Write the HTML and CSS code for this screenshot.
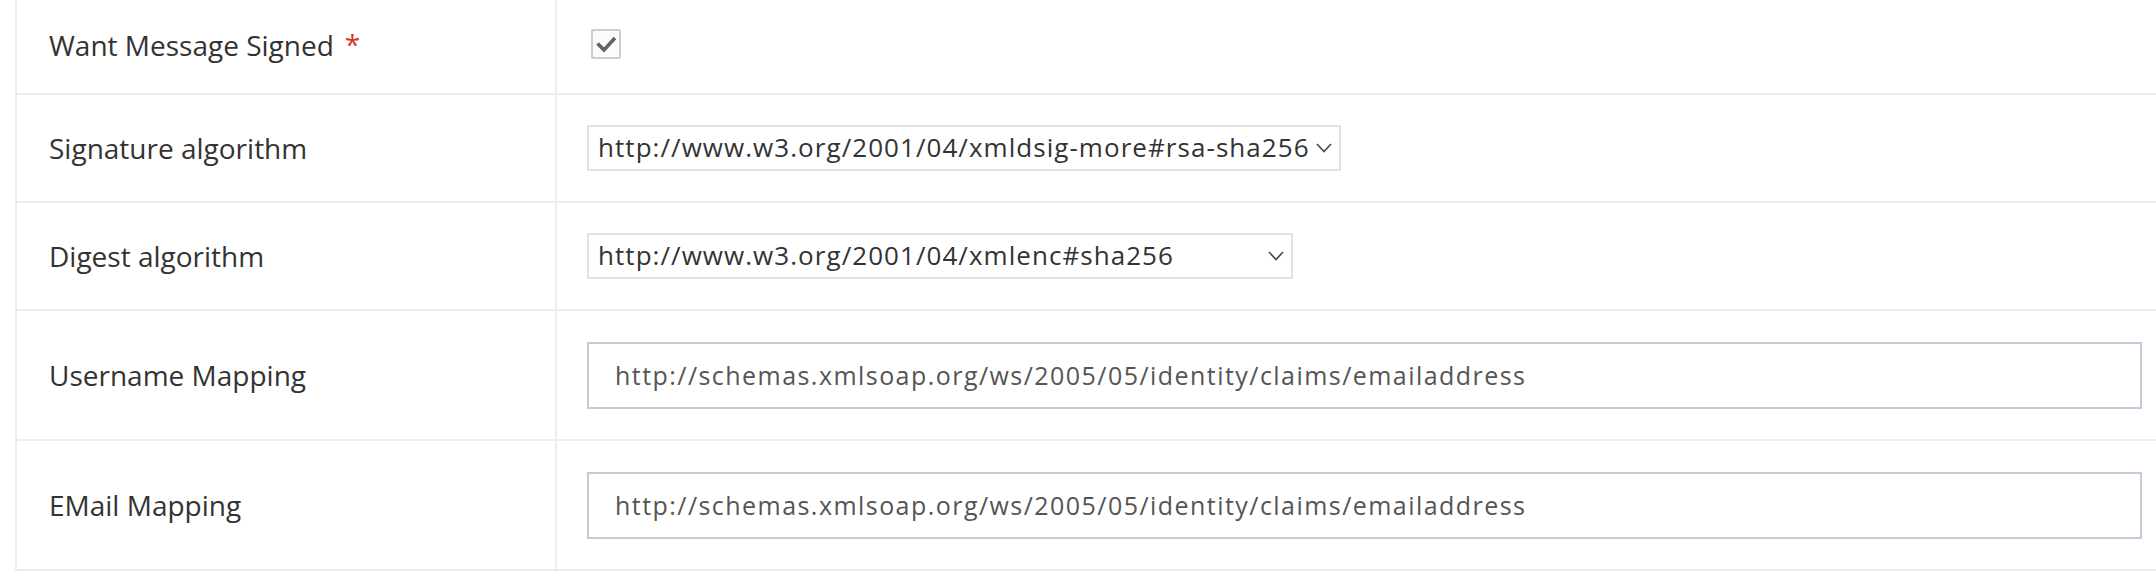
FILE: index.html
```html
<!DOCTYPE html>
<html lang="en">
<head>
<meta charset="utf-8">
<title>SAML settings</title>
<link rel="stylesheet" href="styles.css">
</head>
<body>
<div class="form-table">
  <div class="row row-check">
    <div class="label-cell"><span class="label">Want Message Signed</span><span class="req">*</span></div>
    <div class="value-cell">
      <span class="checkbox" role="checkbox" aria-checked="true">
        <svg width="26" height="26" viewBox="0 0 26 26"><path d="M4.5 12.5 L11 19 L22 7" fill="none" stroke="#626262" stroke-width="3.6"/></svg>
      </span>
    </div>
  </div>
  <div class="row row-mid">
    <div class="label-cell"><span class="label">Signature algorithm</span></div>
    <div class="value-cell">
      <div class="select sel-sig">
        <span class="select-text">http://www.w3.org/2001/04/xmldsig-more#rsa-sha256</span>
        <svg class="chev" width="16" height="10" viewBox="0 0 16 10"><path d="M1 1 L8 8.5 L15 1" fill="none" stroke="#4a4a4a" stroke-width="1.6"/></svg>
      </div>
    </div>
  </div>
  <div class="row row-mid">
    <div class="label-cell"><span class="label">Digest algorithm</span></div>
    <div class="value-cell">
      <div class="select sel-dig">
        <span class="select-text">http://www.w3.org/2001/04/xmlenc#sha256</span>
        <svg class="chev" width="16" height="10" viewBox="0 0 16 10"><path d="M1 1 L8 8.5 L15 1" fill="none" stroke="#4a4a4a" stroke-width="1.6"/></svg>
      </div>
    </div>
  </div>
  <div class="row row-tall">
    <div class="label-cell"><span class="label">Username Mapping</span></div>
    <div class="value-cell">
      <input class="text-input" type="text" value="http://schemas.xmlsoap.org/ws/2005/05/identity/claims/emailaddress">
    </div>
  </div>
  <div class="row row-tall">
    <div class="label-cell"><span class="label">EMail Mapping</span></div>
    <div class="value-cell">
      <input class="text-input" type="text" value="http://schemas.xmlsoap.org/ws/2005/05/identity/claims/emailaddress">
    </div>
  </div>
</div>
</body>
</html>
```

FILE: styles.css
```css
html, body {
  margin: 0;
  padding: 0;
  background: #ffffff;
}

body {
  font-family: "Open Sans", "Noto Sans", "Liberation Sans", sans-serif;
  color: #333333;
  overflow: hidden;
}

.form-table {
  margin-left: 15px;
  margin-top: -3px;
  border-left: 2px solid #ededed;
}

.row {
  display: grid;
  grid-template-columns: 540px 1fr;
  border-bottom: 2px solid #ededed;
}

.row-check { height: 96px; }
.row-mid { height: 106px; }
.row-tall { height: 128px; }

.label-cell {
  display: flex;
  align-items: center;
  padding-left: 32px;
  border-right: 2px solid #ededed;
  font-size: 28px;
  color: #333333;
}

.req {
  color: #d9332b;
  margin-left: 11px;
  font-size: 28px;
  position: relative;
  top: -1px;
}

.value-cell {
  display: flex;
  align-items: center;
  padding-left: 30px;
  padding-right: 14px;
}

.checkbox {
  box-sizing: border-box;
  width: 30px;
  height: 30px;
  margin-left: 4px;
  margin-top: -2px;
  border: 2px solid #cdcdcd;
  border-radius: 2px;
  background: #fbfbfb;
  display: flex;
  align-items: center;
  justify-content: center;
}

.checkbox svg { display: block; }

.select {
  box-sizing: border-box;
  height: 46px;
  border: 2px solid #e3e3e3;
  background: #ffffff;
  display: flex;
  align-items: center;
  justify-content: space-between;
  padding-left: 9px;
  padding-right: 7px;
  font-size: 26px;
  letter-spacing: 1.05px;
  color: #333333;
}

.sel-sig { width: 754px; }
.sel-dig { width: 706px; }

.select-text {
  white-space: nowrap;
  line-height: 1;
  margin-top: -2px;
}

.chev {
  display: block;
  flex: none;
}

.text-input {
  box-sizing: border-box;
  width: 100%;
  height: 67px;
  margin: 0;
  border: 2px solid #c3cbd8;
  border-radius: 0;
  padding: 0 0 0 26px;
  font-family: "Open Sans", "Noto Sans", "Liberation Sans", sans-serif;
  font-size: 25px;
  letter-spacing: 1.45px;
  color: #555555;
  background: #ffffff;
  outline: none;
}
```
